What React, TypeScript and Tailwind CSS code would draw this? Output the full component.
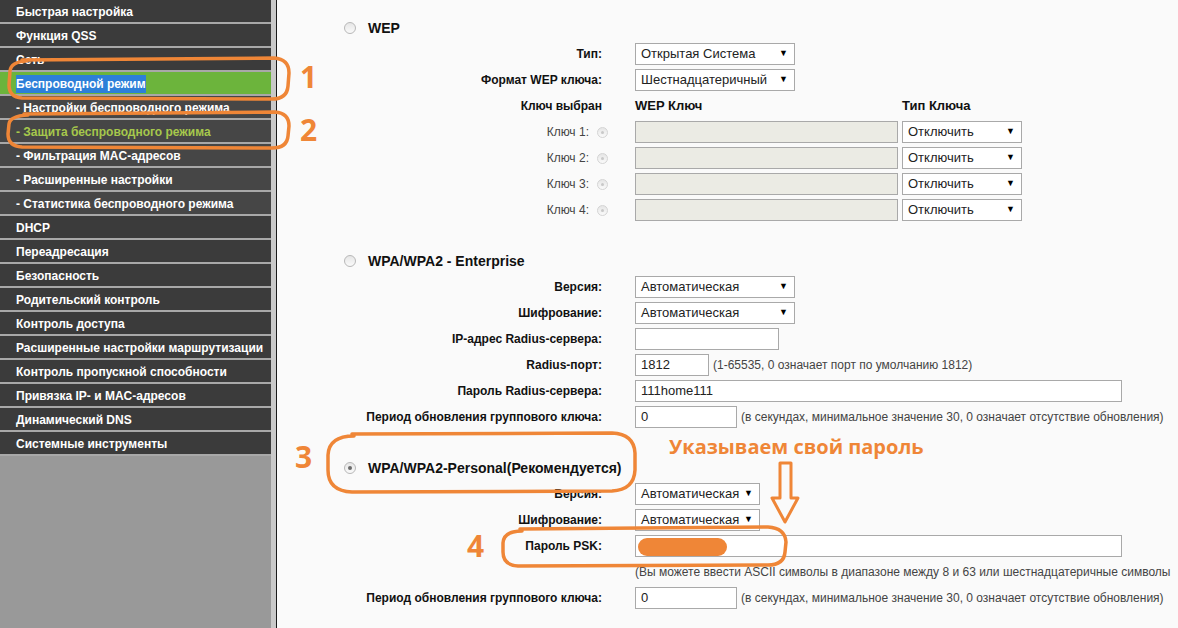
import React from "react";

const O = "#ef8637";

type SideItem = { t: string; sub?: boolean; green?: boolean; active?: boolean };
const side: SideItem[] = [
  { t: "Быстрая настройка" },
  { t: "Функция QSS" },
  { t: "Сеть" },
  { t: "Беспроводной режим", green: true },
  { t: "- Настройки беспроводного режима", sub: true },
  { t: "- Защита беспроводного режима", sub: true, active: true },
  { t: "- Фильтрация MAC-адресов", sub: true },
  { t: "- Расширенные настройки", sub: true },
  { t: "- Статистика беспроводного режима", sub: true },
  { t: "DHCP" },
  { t: "Переадресация" },
  { t: "Безопасность" },
  { t: "Родительский контроль" },
  { t: "Контроль доступа" },
  { t: "Расширенные настройки маршрутизации" },
  { t: "Контроль пропускной способности" },
  { t: "Привязка IP- и MAC-адресов" },
  { t: "Динамический DNS" },
  { t: "Системные инструменты" },
];

function Radio({ checked, small }: { checked?: boolean; small?: boolean }) {
  return (
    <span
      className={
        (small ? "w-[11px] h-[11px] border-[#d4d4d4] " : "w-[12px] h-[12px] border-[#b8b8b8] ") +
        "inline-flex items-center justify-center rounded-full border bg-gradient-to-b from-[#e6e6e6] to-[#fafafa]"
      }
    >
      {checked ? <span className="w-[4px] h-[4px] rounded-full bg-[#6b6b6b]" /> : small ? <span className="w-[3px] h-[3px] rounded-full bg-[#c8c8c8]" /> : null}
    </span>
  );
}

function Select({ value, w }: { value: string; w: string }) {
  return (
    <div className={w + " h-[22px] border border-[#a9a9a9] bg-white flex items-center justify-between pl-[5px] pr-[6px] text-[13px] text-[#222]"}>
      <span>{value}</span>
      <span className="text-[9px] text-black">▼</span>
    </div>
  );
}

function Input({ value, w, grey }: { value?: string; w: string; grey?: boolean }) {
  return (
    <div
      className={
        w +
        " h-[22px] border border-[#a9a9a9] flex items-center pl-[5px] text-[13px] text-[#222] " +
        (grey ? "bg-[#ebebe4]" : "bg-white")
      }
    >
      {value}
    </div>
  );
}

function Row({ label, children, normal }: { label: React.ReactNode; children?: React.ReactNode; normal?: boolean }) {
  return (
    <div className="flex items-center h-[26px]">
      <div className={"w-[325px] flex justify-end items-center text-[12px] " + (normal ? "text-[#444]" : "font-bold text-[#111]")}>
        {label}
      </div>
      <div className="ml-[33px] flex items-center">{children}</div>
    </div>
  );
}

function Heading({ text, checked }: { text: string; checked?: boolean }) {
  return (
    <div className="flex items-center h-[26px] pl-[67px]">
      <Radio checked={checked} />
      <span className="ml-[12px] text-[14px] font-bold text-[#111]">{text}</span>
    </div>
  );
}

function KeyRow({ n }: { n: number }) {
  return (
    <Row
      normal
      label={
        <>
          <span className="text-[12px]">Ключ {n}:</span>
          <span className="ml-[8px] mr-[-6px] flex">
            <Radio small />
          </span>
        </>
      }
    >
      <Input w="w-[263px]" grey />
      <div className="ml-[4px]">
        <Select value="Отключить" w="w-[120px]" />
      </div>
    </Row>
  );
}

export default function App() {
  return (
    <div className="relative w-[1178px] h-[628px] overflow-hidden flex font-['Liberation_Sans',Arial,sans-serif] bg-[#fafafa]">
      <div className="w-[271px] h-full bg-[#999999] flex flex-col">
        {side.map((s, i) => (
          <div
            key={i}
            className={
              "h-[24px] shrink-0 border-b-2 border-[#a8a8a8] flex items-center pl-[16px] pt-[2px] text-[12px] font-bold " +
              (s.green ? "bg-[#6cb43c]" : s.sub ? "bg-[#464646]" : "bg-[#3b3b3b]") +
              " " +
              (s.active ? "text-[#a6c84c]" : "text-white")
            }
          >
            {s.green ? <span className="bg-[#2d7fd8] text-white">{s.t}</span> : s.t}
          </div>
        ))}
      </div>
      <div className="w-[5px] h-full bg-[#c9c9c9]" />
      <div className="w-[1px] h-full bg-[#1a1a1a]" />
      <div className="flex-1 h-full pt-[15px] bg-[#fafafa]">
        <Heading text="WEP" />
        <Row label="Тип:">
          <Select value="Открытая Система" w="w-[160px]" />
        </Row>
        <Row label="Формат WEP ключа:">
          <Select value="Шестнадцатеричный" w="w-[160px]" />
        </Row>
        <Row label="Ключ выбран">
          <span className="w-[267px] text-[13px] font-bold text-[#111]">WEP Ключ</span>
          <span className="text-[13px] font-bold text-[#111]">Тип Ключа</span>
        </Row>
        <KeyRow n={1} />
        <KeyRow n={2} />
        <KeyRow n={3} />
        <KeyRow n={4} />
        <div className="h-[25px]" />
        <Heading text="WPA/WPA2 - Enterprise" />
        <Row label="Версия:">
          <Select value="Автоматическая" w="w-[160px]" />
        </Row>
        <Row label="Шифрование:">
          <Select value="Автоматическая" w="w-[160px]" />
        </Row>
        <Row label="IP-адрес Radius-сервера:">
          <Input w="w-[144px]" />
        </Row>
        <Row label="Radius-порт:">
          <Input w="w-[74px]" value="1812" />
          <span className="ml-[4px] text-[12px] text-[#444]">(1-65535, 0 означает порт по умолчанию 1812)</span>
        </Row>
        <Row label="Пароль Radius-сервера:">
          <Input w="w-[487px]" value="111home111" />
        </Row>
        <Row label="Период обновления группового ключа:">
          <Input w="w-[102px]" value="0" />
          <span className="ml-[4px] text-[12px] text-[#444]">(в секундах, минимальное значение 30, 0 означает отсутствие обновления)</span>
        </Row>
        <div className="h-[25px]" />
        <Heading text="WPA/WPA2-Personal(Рекомендуется)" checked />
        <Row label="Версия:">
          <Select value="Автоматическая" w="w-[125px]" />
        </Row>
        <Row label="Шифрование:">
          <Select value="Автоматическая" w="w-[125px]" />
        </Row>
        <Row label="Пароль PSK:">
          <Input w="w-[487px]" />
        </Row>
        <Row label="">
          <span className="text-[12px] text-[#444] whitespace-nowrap">
            (Вы можете ввести ASCII символы в диапазоне между 8 и 63 или шестнадцатеричные символы
          </span>
        </Row>
        <Row label="Период обновления группового ключа:">
          <Input w="w-[102px]" value="0" />
          <span className="ml-[4px] text-[12px] text-[#444]">(в секундах, минимальное значение 30, 0 означает отсутствие обновления)</span>
        </Row>
      </div>

      {/* annotations overlay */}
      <svg className="absolute left-0 top-0 pointer-events-none" width="1178" height="628" viewBox="0 0 1178 628">
        <g fill="none" stroke={O} strokeWidth="3.5" strokeLinecap="round" strokeLinejoin="round">
          <path d="M 22 60 L 274 58 Q 289 59 289 73 L 288 86 Q 287 99 272 99 L 22 98 Q 9 97 9 85 L 10 71 Q 11 62 26 61" />
          <path d="M 24 114 L 275 112 Q 289 113 289 126 L 288 136 Q 287 148 272 148 L 22 147 Q 8 146 8 134 L 9 124 Q 10 116 28 115" />
          <path d="M 352 434 L 612 433 Q 634 434 635 453 L 635 470 Q 634 490 612 491 L 352 492 Q 328 491 328 470 L 328 455 Q 329 436 354 436" />
          <path d="M 520 529 L 768 527 Q 785 528 786 542 L 785 552 Q 784 565 768 565 L 518 566 Q 503 565 503 552 L 503 543 Q 504 531 522 531" />
          <path d="M 780 463 L 791 463 L 791 498 L 798 498 L 785 522 L 772 498 L 780 498 Z" strokeWidth="3" />
        </g>
        <rect x="638" y="538" width="89" height="18" rx="9" fill={O} />
      </svg>
      <div className="absolute left-[300px] top-[62px] text-[30px] leading-none font-bold font-['Open_Sans',sans-serif] text-[#ef8637] pointer-events-none">1</div>
      <div className="absolute left-[300px] top-[115px] text-[30px] leading-none font-bold font-['Open_Sans',sans-serif] text-[#ef8637] pointer-events-none">2</div>
      <div className="absolute left-[295px] top-[442px] text-[30px] leading-none font-bold font-['Open_Sans',sans-serif] text-[#ef8637] pointer-events-none">3</div>
      <div className="absolute left-[467px] top-[531px] text-[30px] leading-none font-bold font-['Open_Sans',sans-serif] text-[#ef8637] pointer-events-none">4</div>
      <div className="absolute left-[669px] top-[437px] text-[20px] leading-none font-bold font-['Open_Sans',sans-serif] text-[#ef8637] pointer-events-none whitespace-nowrap">
        Указываем свой пароль
      </div>
    </div>
  );
}
